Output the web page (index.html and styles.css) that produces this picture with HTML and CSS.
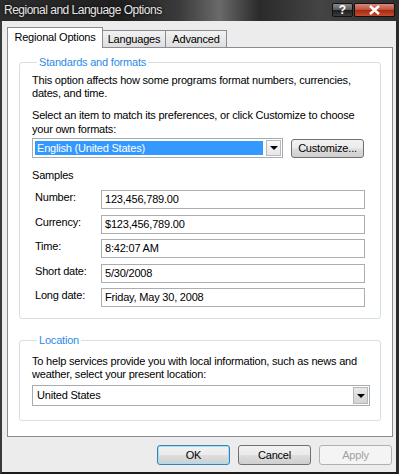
FILE: index.html
```html
<!DOCTYPE html>
<html lang="en">
<head>
    <meta charset="UTF-8">
    <title>Regional and Language Options</title>
    <link rel="stylesheet" href="styles.css">
</head>
<body>
    <div class="window">
        <div class="titlebar">
            <span class="title">Regional and Language Options</span>
            <div class="caption-buttons">
                <span class="cap help">?</span>
                <span class="cap close">
                    <svg width="13" height="10" viewBox="0 0 13 10">
                        <path d="M2 1 L11 9 M11 1 L2 9" stroke="#fff" stroke-width="2.4" fill="none"/>
                    </svg>
                </span>
            </div>
        </div>

        <div class="dialog">
            <div class="tabs">
                <div class="tab active">Regional Options</div>
                <div class="tab tab-languages">Languages</div>
                <div class="tab tab-advanced">Advanced</div>
            </div>

            <div class="panel">
                <div class="group standards">
                    <div class="legend">Standards and formats</div>
                    <p class="intro">This option affects how some programs format numbers, currencies, dates, and time.</p>
                    <p class="hint">Select an item to match its preferences, or click Customize to choose your own formats:</p>
                    <div class="format-row">
                        <div class="combo format-combo">
                            <div class="combo-value selected">English (United States)</div>
                            <div class="combo-btn"><span class="arrow"></span></div>
                        </div>
                        <button class="btn customize">Customize...</button>
                    </div>

                    <div class="samples-title">Samples</div>
                    <div class="samples">
                        <div class="sample-row">
                            <span class="sample-label">Number:</span>
                            <div class="field">123,456,789.00</div>
                        </div>
                        <div class="sample-row">
                            <span class="sample-label">Currency:</span>
                            <div class="field">$123,456,789.00</div>
                        </div>
                        <div class="sample-row">
                            <span class="sample-label">Time:</span>
                            <div class="field">8:42:07 AM</div>
                        </div>
                        <div class="sample-row">
                            <span class="sample-label">Short date:</span>
                            <div class="field">5/30/2008</div>
                        </div>
                        <div class="sample-row">
                            <span class="sample-label">Long date:</span>
                            <div class="field">Friday, May 30, 2008</div>
                        </div>
                    </div>
                </div>

                <div class="group location">
                    <div class="legend">Location</div>
                    <p class="intro">To help services provide you with local information, such as news and weather, select your present location:</p>
                    <div class="combo location-combo">
                        <div class="combo-value">United States</div>
                        <div class="combo-btn shaded"><span class="arrow"></span></div>
                    </div>
                </div>
            </div>

            <div class="buttons">
                <button class="btn default">OK</button>
                <button class="btn">Cancel</button>
                <button class="btn" disabled>Apply</button>
            </div>
        </div>
    </div>
</body>
</html>
```

FILE: styles.css
```css
body {
    margin: 0;
    font-family: "Liberation Sans", Arial, sans-serif;
    font-size: 11px;
    color: #000;
    background: #ececec;
}
.window {
    width: 399px;
    height: 474px;
    box-sizing: border-box;
    background: #ececec;
    border-left: 2px solid #3a3a3a;
    border-right: 3px solid #2a2a2a;
    border-bottom: 2px solid #1c1c1c;
}
.titlebar {
    height: 21px;
    margin-left: -2px;
    margin-right: -3px;
    padding-left: 4px;
    display: flex;
    justify-content: space-between;
    background: linear-gradient(90deg, #2c2c2c 0%, #1f1f1f 30%, #3b3b3b 45%, #6a6a6a 55%, #2a2a2a 65%, #444 80%, #2e2e2e 100%);
}
.title {
    font-size: 12px;
    letter-spacing: -0.5px;
    line-height: 21px;
    color: #e6e6e6;
    text-shadow: 0 0 3px #000;
}
.caption-buttons {
    display: flex;
    gap: 1px;
    margin-top: 3px;
    margin-right: 4px;
    height: 14px;
}
.cap {
    height: 14px;
    box-sizing: border-box;
    border: 1px solid #111;
    border-radius: 2px;
    display: flex;
    align-items: center;
    justify-content: center;
}
.help {
    width: 21px;
    background: linear-gradient(#8a8a8a 0%, #5a5a5a 48%, #1d1d1d 52%, #3c3c3c 100%);
    color: #fff;
    font-weight: bold;
    font-size: 12px;
}
.close {
    width: 41px;
    background: linear-gradient(#d88a7a 0%, #c0503c 48%, #a42a12 52%, #c64c2e 100%);
}
.dialog {
    padding: 6px 3px 0 5px;
    letter-spacing: -0.2px;
}
.tabs {
    display: flex;
    align-items: flex-end;
    height: 20px;
}
.tab {
    box-sizing: border-box;
    height: 17px;
    border: 1px solid #898c95;
    border-bottom: none;
    text-align: center;
    line-height: 17px;
    background: linear-gradient(#f2f2f2, #dedede);
}
.tab.active {
    width: 96px;
    height: 21px;
    line-height: 18px;
    background: #fff;
    position: relative;
    z-index: 1;
    margin-bottom: -1px;
}
.tab-languages {
    width: 63px;
    border-left: none;
}
.tab-advanced {
    width: 61px;
    border-left: none;
}
.panel {
    box-sizing: border-box;
    height: 390px;
    width: 386px;
    background: #fff;
    border: 1px solid #898c95;
    padding: 14px 11px 0 11px;
}
.group {
    box-sizing: border-box;
    border: 1px solid #d5dfe5;
    border-radius: 3px;
    padding: 0 12px;
}
.standards {
    height: 257px;
}
.location {
    height: 81px;
    margin-top: 21px;
}
.legend {
    display: table;
    margin: -7px 0 0 5px;
    padding: 0 2px;
    background: #fff;
    color: #2d8ae8;
    line-height: 13px;
}
p {
    margin: 0;
    line-height: 13px;
}
.intro {
    margin-top: 5px;
}
.location .intro {
    margin-top: 8px;
}
.hint {
    margin-top: 8px;
    line-height: 14px;
}
.format-row {
    display: flex;
    align-items: center;
    margin-top: 2px;
}
.combo {
    box-sizing: border-box;
    display: flex;
    height: 20px;
    border: 1px solid #a5acb5;
    background: #fff;
}
.format-combo {
    width: 251px;
}
.location-combo {
    width: 338px;
    height: 21px;
    margin-top: 4px;
}
.combo-value {
    flex: 1;
    margin: 2px;
    padding-left: 2px;
    line-height: 14px;
}
.combo-value.selected {
    background: #3399ff;
    color: #fff;
}
.combo-btn {
    box-sizing: border-box;
    width: 15px;
    margin: 1px;
    border: 1px solid #b8b8b8;
    background: linear-gradient(#fafafa, #e6e6e6);
    display: flex;
    align-items: center;
    justify-content: center;
}
.combo-btn.shaded {
    background: linear-gradient(#e8e8e8, #d4d4d4);
}
.arrow {
    width: 0;
    height: 0;
    border-left: 4px solid transparent;
    border-right: 4px solid transparent;
    border-top: 4px solid #000;
}
.btn {
    box-sizing: border-box;
    width: 73px;
    height: 20px;
    padding: 0;
    font-family: inherit;
    font-size: 11px;
    letter-spacing: -0.2px;
    color: #000;
    border: 1px solid #707070;
    border-radius: 3px;
    background: linear-gradient(#f2f2f2 0%, #ebebeb 48%, #dddddd 52%, #cfcfcf 100%);
}
.customize {
    height: 19px;
    margin-left: 8px;
}
.btn.default {
    border-color: #3c7fb1;
    box-shadow: inset 0 0 0 1px #9fe0fb;
}
.btn:disabled {
    border-color: #adb2b5;
    background: #f4f4f4;
    color: #a0a0a0;
}
.samples-title {
    margin-top: 11px;
    line-height: 13px;
}
.samples {
    display: flex;
    flex-direction: column;
    gap: 5.5px;
    margin-top: 8px;
}
.sample-row {
    display: flex;
}
.sample-label {
    width: 66px;
    padding-left: 3px;
    line-height: 15px;
}
.field {
    box-sizing: border-box;
    width: 264px;
    height: 19px;
    border: 1px solid #abadb3;
    padding-left: 3px;
    line-height: 17px;
}
.buttons {
    display: flex;
    justify-content: flex-end;
    gap: 8px;
    margin-top: 8px;
    margin-right: 1px;
}
```
